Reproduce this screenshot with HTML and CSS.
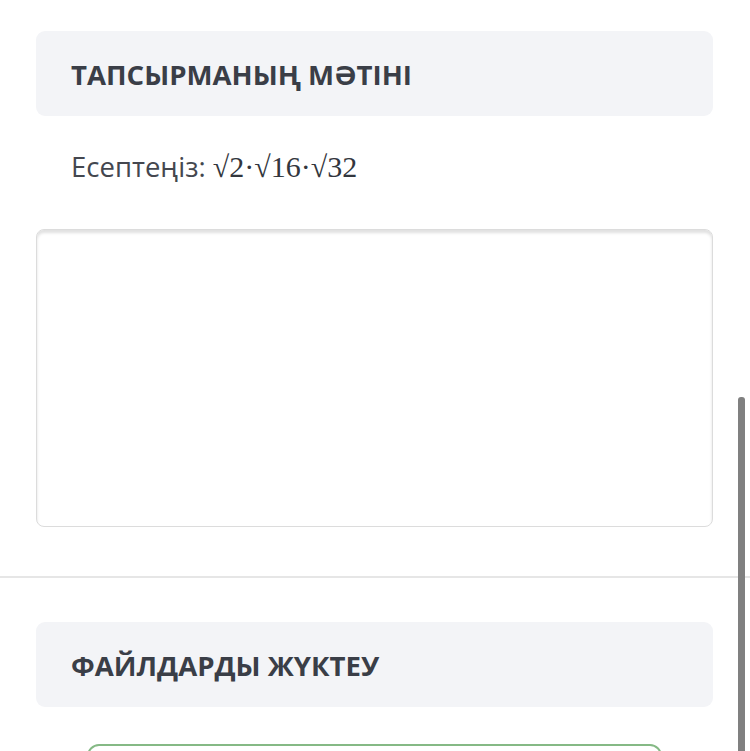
FILE: index.html
```html
<!DOCTYPE html>
<html lang="kk">
<head>
<meta charset="utf-8">
<title>Тапсырма</title>
<link rel="stylesheet" href="styles.css">
</head>
<body>
<div class="page">
  <section class="block">
    <div class="panel-head"><h2 class="panel-title">ТАПСЫРМАНЫҢ МӘТІНІ</h2></div>
    <p class="task-text">Есептеңіз: <span class="math">√2·√16·√32</span></p>
    <div class="answer-box"></div>
  </section>
  <hr class="divider">
  <section class="block">
    <div class="panel-head"><h2 class="panel-title">ФАЙЛДАРДЫ ЖҮКТЕУ</h2></div>
    <div class="upload-btn"></div>
  </section>
</div>
<div class="scroll-thumb"></div>
</body>
</html>
```

FILE: styles.css
```css
html, body {
  margin: 0;
  padding: 0;
  background: #ffffff;
  overflow: hidden;
  height: 751px;
}
body {
  font-family: "Open Sans", "Noto Sans", sans-serif;
  color: #3d4049;
}
.page {
  padding-top: 31px;
}
.block {
  padding: 0 37px 0 36px;
}
.panel-head {
  background: #f3f4f7;
  border-radius: 9px;
  height: 85px;
  display: flex;
  align-items: center;
  padding-left: 35px;
}
.panel-title {
  margin: 0;
  font-size: 27.6px;
  font-weight: 700;
  color: #3a3e47;
  letter-spacing: 0;
}
.task-text {
  margin: 0;
  padding: 30px 0 0 35px;
  height: 42px;
  line-height: 42px;
  font-size: 27.5px;
  color: #44474f;
}
.math {
  font-family: "Liberation Serif", "DejaVu Serif", serif;
  font-size: 30px;
  color: #33363d;
}
.answer-box {
  margin-top: 41px;
  height: 296px;
  border: 1px solid #dcdcdc;
  border-radius: 8px;
  box-shadow: inset 0 3px 3px rgba(0,0,0,0.12);
}
.divider {
  margin: 49px 0 0 0;
  border: 0;
  border-top: 2px solid #e6e6e6;
  height: 0;
}
.block:last-of-type {
  padding-top: 44px;
}
.upload-btn {
  margin: 37px 51px 0 51px;
  height: 40px;
  border: 2px solid #85b985;
  border-radius: 12px;
}
.scroll-thumb {
  position: absolute;
  left: 738px;
  top: 397px;
  width: 7px;
  height: 360px;
  background: #808080;
  border-radius: 3px 3px 0 0;
}
```
